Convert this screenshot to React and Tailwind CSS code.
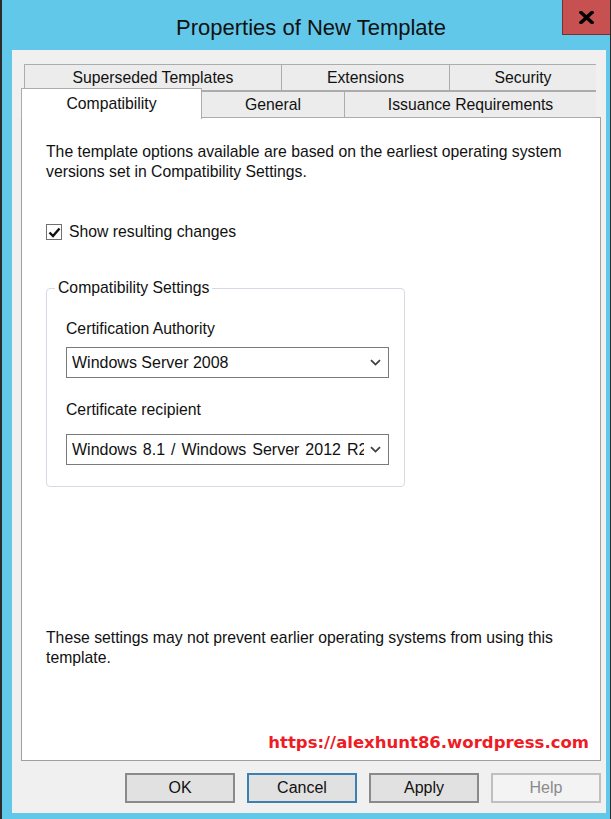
const ui = "font-['Liberation_Sans',Arial,sans-serif]";

function Chevron() {
  return (
    <svg width="11" height="7" viewBox="0 0 11 7" className="shrink-0">
      <path d="M1 1.2 L5.5 5.6 L10 1.2" fill="none" stroke="#404040" strokeWidth="1.8" />
    </svg>
  );
}

function Combo({ value, className = '' }) {
  return (
    <div className="flex h-[31px] w-[323px] items-center border border-[#7a7a7a] bg-white pl-[5px] pr-[7px]">
      <span className={`mr-[6px] flex-1 overflow-hidden whitespace-nowrap text-[16px] text-[#111] ${className}`}>{value}</span>
      <Chevron />
    </div>
  );
}

function Tab({ label, w, className = '' }) {
  return (
    <div
      className={`flex h-full items-center justify-center border border-r-0 border-[#acacac] bg-[#ececec] text-[15.75px] text-[#111] ${className}`}
      style={{ width: w }}
    >
      {label}
    </div>
  );
}

function Button({ label, primary, disabled }) {
  const tone = disabled
    ? 'border-[#bfbfbf] bg-[#f3f3f3] text-[#8a8a8a]'
    : primary
      ? 'border-[#3c7fb1] bg-[#e1e1e1] text-[#111]'
      : 'border-[#8a8a8a] bg-[#e1e1e1] text-[#111]';
  return (
    <div className={`flex h-[30px] w-[110px] items-center justify-center border-2 text-[16px] ${tone}`}>
      {label}
    </div>
  );
}

export default function App() {
  return (
    <div className={`flex h-[819px] w-[611px] flex-col border-l-2 border-r border-[#2b2b2b] bg-[#62c8ea] pb-[6px] pl-[10px] pr-[4px] ${ui}`}>
      {/* barra de titulo */}
      <div className="relative flex h-[50px] shrink-0 items-center justify-center pl-[4px] pt-[4px]">
        <span className="text-[22px] text-[#111]">Properties of New Template</span>
        <div className="absolute right-[-4px] top-0 flex h-[35px] w-[48px] items-center justify-center border-b border-l border-[#7a3030] bg-[#c75050]">
          <svg width="15" height="13" viewBox="0 0 15 13">
            <path d="M2 1.5 L13 11.5 M13 1.5 L2 11.5" stroke="#000" strokeWidth="3.6" strokeLinecap="square" />
          </svg>
        </div>
      </div>

      {/* area cliente */}
      <div className="flex flex-1 flex-col bg-[#f0f0f0] pl-[9px] pr-[5px] pt-[14px]">
        {/* abas linha 1 */}
        <div className="flex h-[27px] pl-[3px]">
          <Tab label="Superseded Templates" w={257} />
          <Tab label="Extensions" w={168} />
          <Tab label="Security" w={147} className="border-r" />
        </div>
        {/* abas linha 2 */}
        <div className="relative z-10 flex h-[27px]">
          <div className="mt-[-3px] flex h-[31px] w-[181px] items-start justify-center border border-b-0 border-[#acacac] bg-white pt-[3px] text-[15.75px] text-[#111]">
            Compatibility
          </div>
          <Tab label="General" w={142} className="border-l-0" />
          <Tab label="Issuance Requirements" w={252} className="border-r" />
        </div>

        {/* painel */}
        <div className="mt-[-1px] flex h-[644px] w-[580px] flex-col border border-[#a0a0a0] bg-white pl-[24px] text-[15.75px] leading-[20px] text-[#111]">
          <p className="mt-[24px] w-[535px]">
            The template options available are based on the earliest operating system versions set in Compatibility Settings.
          </p>

          <div className="mt-[40px] flex items-center gap-[7px]">
            <div className="flex h-[16px] w-[16px] items-center justify-center border border-[#707070] bg-white">
              <svg width="13" height="11" viewBox="0 0 13 11">
                <path d="M1.5 5.5 L5 9 L11.5 1.5" fill="none" stroke="#111" strokeWidth="2.4" />
              </svg>
            </div>
            <span>Show resulting changes</span>
          </div>

          {/* grupo */}
          <div className="relative mt-[46px] h-[199px] w-[359px] rounded-[4px] border border-[#d5dbe3] pl-[19px]">
            <span className="absolute left-[8px] top-[-11px] bg-white px-[3px]">Compatibility Settings</span>
            <div className="mt-[30px]">Certification Authority</div>
            <div className="mt-[8px]">
              <Combo value="Windows Server 2008" />
            </div>
            <div className="mt-[22px]">Certificate recipient</div>
            <div className="mt-[14px]">
              <Combo value="Windows 8.1 / Windows Server 2012 R2" className="[word-spacing:1.5px]" />
            </div>
          </div>

          <p className="mt-[141px] w-[535px]">
            These settings may not prevent earlier operating systems from using this template.
          </p>

          <div className="mt-[65px] pr-[11px] text-right font-['DejaVu_Sans',sans-serif] text-[16.5px] font-bold text-[#ee1c24]">
            https://alexhunt86.wordpress.com
          </div>
        </div>

        {/* botoes */}
        <div className="mt-[12px] flex gap-[12px] pl-[104px]">
          <Button label="OK" />
          <Button label="Cancel" primary />
          <Button label="Apply" />
          <Button label="Help" disabled />
        </div>
      </div>
    </div>
  );
}
